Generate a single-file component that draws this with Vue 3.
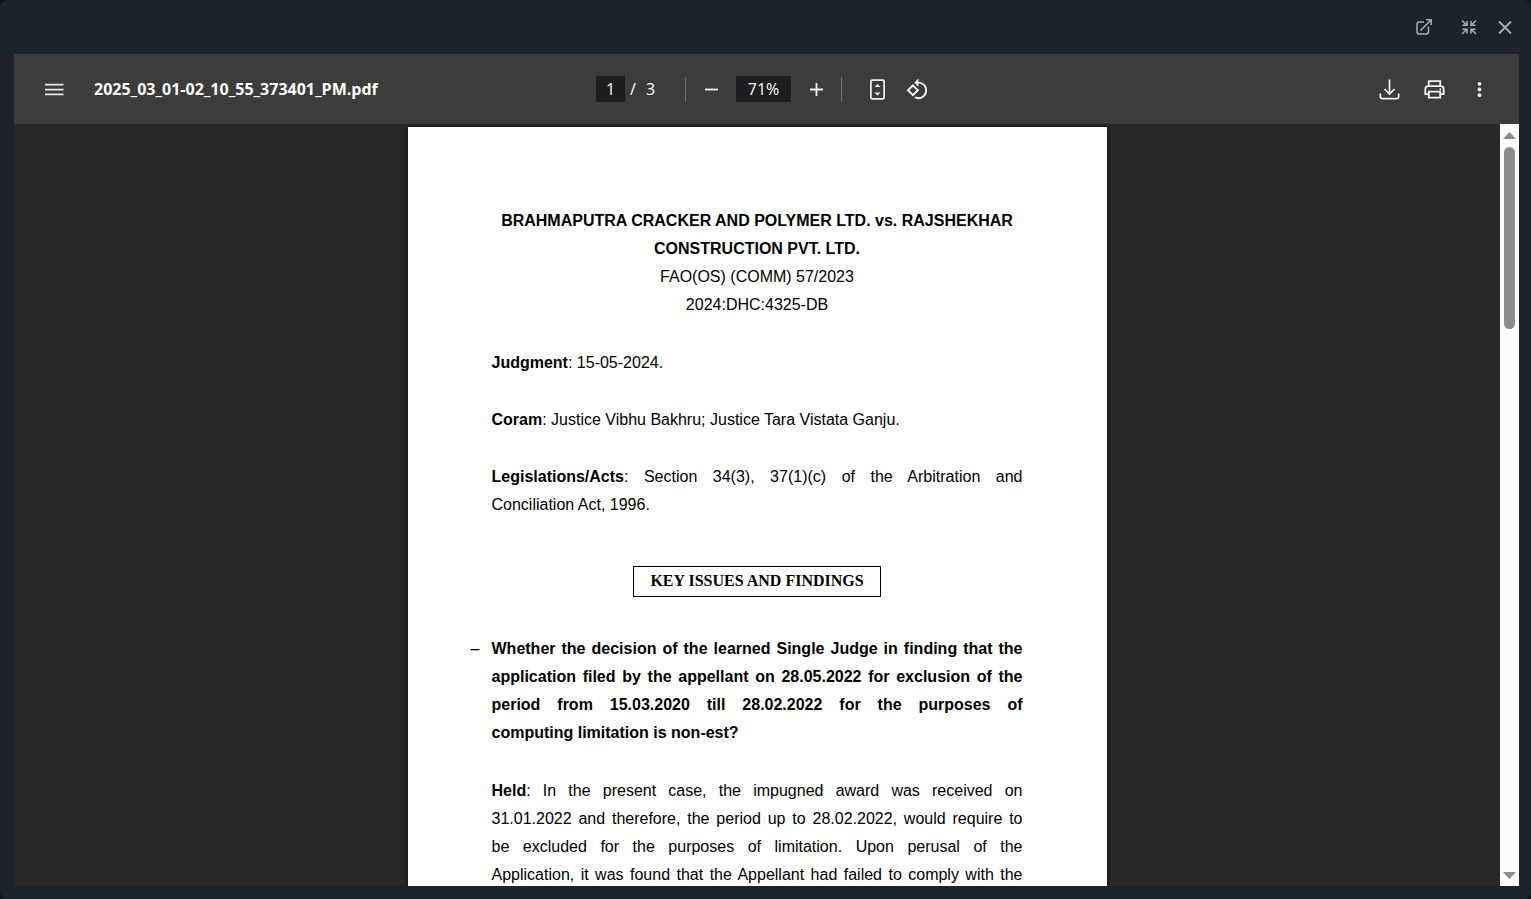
<script setup>
import { ref } from 'vue'

const page = ref('1')
const zoom = ref('71%')

const titleLines = [
  'BRAHMAPUTRA CRACKER AND POLYMER LTD. vs. RAJSHEKHAR',
  'CONSTRUCTION PVT. LTD.',
]
const issueLines = [
  'Whether the decision of the learned Single Judge in finding that the',
  'application filed by the appellant on 28.05.2022 for exclusion of the',
  'period from 15.03.2020 till 28.02.2022 for the purposes of',
]
const heldLines = [
  '31.01.2022 and therefore, the period up to 28.02.2022, would require to',
  'be excluded for the purposes of limitation. Upon perusal of the',
  'Application, it was found that the Appellant had failed to comply with the',
]
</script>

<template>
  <div class="modal">
    <header class="modal-bar">
      <button class="icon-btn small" aria-label="Open in new tab">
        <svg viewBox="0 0 18 18" width="18" height="18" fill="none" stroke="currentColor" stroke-width="1.500">
          <path d="M9 4H4.200Q2 4 2 6.200V13.800Q2 16 4.200 16H11.300Q13.500 16 13.500 13.800V8.500M5.500 12.500L16 2M11 1.800H16.200V7" />
        </svg>
      </button>
      <button class="icon-btn small collapse" aria-label="Exit full screen">
        <svg viewBox="0 0 18 18" width="18" height="18" fill="none" stroke="currentColor" stroke-width="1.500">
          <path d="M2 2.500L6.500 7M7 3V7.300H2.500M16 2.500L11.500 7M11 3V7.300H15.500M2 16L6.500 11.500M7 15.500V11.200H2.500M16 16L11.500 11.500M11 15.500V11.200H15.500" />
        </svg>
      </button>
      <button class="icon-btn small" aria-label="Close">
        <svg viewBox="0 0 18 18" width="18" height="18" fill="none" stroke="currentColor" stroke-width="1.900">
          <path d="M3 3.500L15 15.500M15 3.500L3 15.500" />
        </svg>
      </button>
    </header>

    <main class="viewer">
      <div class="toolbar">
        <div class="left">
          <button class="icon-btn" aria-label="Menu">
            <svg viewBox="0 0 24 24" width="24" height="24" fill="#e8e8e8">
              <path d="M3 6.800h18.500v1.700H3zM3 11.700h18.500v1.700H3zM3 16.600h18.500v1.700H3z" />
            </svg>
          </button>
          <h1 class="filename">2025_03_01-02_10_55_373401_PM.pdf</h1>
        </div>

        <div class="center">
          <input v-model="page" class="field page-field" aria-label="Page number" />
          <span class="total"><span>/</span><span>3</span></span>
          <span class="divider"></span>
          <button class="icon-btn" aria-label="Zoom out">
            <svg viewBox="0 0 24 24" width="24" height="24" fill="currentColor"><path d="M6 11.600h13v1.800H6z" /></svg>
          </button>
          <input v-model="zoom" class="field zoom-field" aria-label="Zoom level" />
          <button class="icon-btn" aria-label="Zoom in">
            <svg viewBox="0 0 24 24" width="24" height="24" fill="currentColor"><path d="M6 11.600h5.600V6h1.800v5.600H19v1.800h-5.600V19h-1.800v-5.600H6z" /></svg>
          </button>
          <span class="divider"></span>
          <button class="icon-btn fit" aria-label="Fit to page">
            <svg viewBox="0 0 24 24" width="24" height="24" fill="none" stroke="currentColor" stroke-width="1.700">
              <rect x="5.900" y="3.200" width="13.200" height="18.700" rx="1.300" />
              <path d="M9.500 10L12.500 7L15.500 10zM9.500 15.500L12.500 18.500L15.500 15.500z" fill="currentColor" stroke="none" />
            </svg>
          </button>
          <button class="icon-btn rotate" aria-label="Rotate counterclockwise">
            <svg viewBox="0 0 24 24" width="24" height="24" fill="currentColor">
              <path transform="translate(.8 .8) scale(.97)" d="M7.340 6.410L.860 12.900l6.490 6.480 6.490-6.480-6.500-6.490zM3.690 12.900l3.660-3.660L11 12.900l-3.660 3.660-3.650-3.660zm15.670-6.260C17.610 4.880 15.300 4 13 4V.760L8.760 5 13 9.240V6c1.790 0 3.580.680 4.950 2.050 2.730 2.730 2.730 7.170 0 9.900C16.580 19.320 14.790 20 13 20c-.970 0-1.940-.210-2.840-.610l-1.490 1.490C10.020 21.620 11.510 22 13 22c2.300 0 4.610-.880 6.360-2.640 3.520-3.510 3.520-9.210 0-12.720z" />
            </svg>
          </button>
        </div>

        <div class="right">
          <button class="icon-btn" aria-label="Download">
            <svg viewBox="0 0 24 24" width="24" height="24" fill="none" stroke="currentColor" stroke-width="1.700">
              <path d="M12.500 2.500V17M7.500 12L12.500 17L17.500 12M3.300 16.500V19.500Q3.300 21.700 5.500 21.700H19.500Q21.700 21.700 21.700 19.500V16.500" />
            </svg>
          </button>
          <button class="icon-btn" aria-label="Print">
            <svg viewBox="0 0 24 24" width="24" height="24" fill="none" stroke="currentColor" stroke-width="1.800">
              <path d="M6.800 9.200V4.200H18.200V9.200M6.800 17.200H3.300V12.200Q3.300 9.200 6.300 9.200H18.700Q21.700 9.200 21.700 12.200V17.200H18.200M6.800 14.700H18.200V20.700H6.800z" />
              <circle cx="18.300" cy="12.200" r="1" fill="currentColor" stroke="none" />
            </svg>
          </button>
          <button class="icon-btn" aria-label="More actions">
            <svg viewBox="0 0 24 24" width="24" height="24" fill="currentColor">
              <circle cx="12.500" cy="6.800" r="1.900" /><circle cx="12.500" cy="12.500" r="1.900" /><circle cx="12.500" cy="18.200" r="1.900" />
            </svg>
          </button>
        </div>
      </div>

      <div class="content">
        <div class="canvas">
          <article class="sheet">
            <div class="heading">
              <strong v-for="line in titleLines" :key="line" class="line">{{ line }}</strong>
              <span class="line">FAO(OS) (COMM) 57/2023</span>
              <span class="line">2024:DHC:4325-DB</span>
            </div>
            <p><strong>Judgment</strong>: 15-05-2024.</p>
            <p><strong>Coram</strong>: Justice Vibhu Bakhru; Justice Tara Vistata Ganju.</p>
            <p>
              <span class="line full"><strong>Legislations/Acts</strong>: Section 34(3), 37(1)(c) of the Arbitration and</span>
              <span class="line">Conciliation Act, 1996.</span>
            </p>
            <h2 class="boxed">KEY ISSUES AND FINDINGS</h2>
            <div class="issue">
              <span class="dash">–</span>
              <strong v-for="line in issueLines" :key="line" class="line full">{{ line }}</strong>
              <strong class="line">computing limitation is non-est?</strong>
            </div>
            <div>
              <span class="line full"><strong>Held</strong>: In the present case, the impugned award was received on</span>
              <span v-for="line in heldLines" :key="line" class="line full">{{ line }}</span>
            </div>
          </article>
        </div>
        <div class="scrollbar" aria-hidden="true">
          <svg viewBox="0 0 13 7" width="13" height="7"><path d="M6.500 0L13 7H0z" fill="#8b8b8b" /></svg>
          <div class="track"><div class="thumb"></div></div>
          <svg viewBox="0 0 13 7" width="13" height="7"><path d="M0 0H13L6.500 7z" fill="#8b8b8b" /></svg>
        </div>
      </div>
    </main>
  </div>
</template>

<style>
body {
  margin: 0;
  background: #11151c;
}
</style>

<style scoped>
* {
  box-sizing: border-box;
}
.modal {
  display: flex;
  flex-direction: column;
  height: 100vh;
  padding: 0 12px 13px 14px;
  border-radius: 8px;
  background: #1d232a;
  overflow: hidden;
  font-family: "Open Sans", "Noto Sans", sans-serif;
}
.modal-bar {
  display: flex;
  align-items: center;
  justify-content: flex-end;
  gap: 18px;
  flex: 0 0 54px;
  padding-right: 5px;
}
.icon-btn {
  display: block;
  width: 24px;
  height: 24px;
  padding: 0;
  border: 0;
  background: none;
  color: #f1f1f1;
  cursor: pointer;
}
.icon-btn svg {
  display: block;
}
.small {
  width: 18px;
  height: 18px;
  color: #a6adbb;
}
.collapse {
  margin-left: 9px;
}
.viewer {
  display: flex;
  flex-direction: column;
  flex: 1;
  min-height: 0;
}
.toolbar {
  display: grid;
  grid-template-columns: 1fr auto 1fr;
  align-items: center;
  flex: 0 0 70px;
  padding: 0 28px 0 20px;
  background: #3c3c3c;
  color: #fff;
}
.left,
.center,
.right {
  display: flex;
  align-items: center;
}
.left {
  gap: 28px;
  padding-left: 8px;
}
.filename {
  margin: 0;
  font-size: 16px;
  font-weight: 700;
  line-height: 24px;
  white-space: nowrap;
}
.field {
  height: 26px;
  padding: 0;
  border: 0;
  background: #1e1e1e;
  color: #fff;
  font: 16px/24px "Open Sans", "Noto Sans", sans-serif;
  text-align: center;
}
.page-field {
  width: 29px;
}
.zoom-field {
  width: 55px;
  margin: 0 13px;
}
.total {
  display: flex;
  gap: 10px;
  width: 60px;
  padding-left: 5px;
  font-size: 16px;
  line-height: 24px;
}
.divider {
  width: 1px;
  height: 25px;
  margin-right: 13px;
  background: #6e6e6e;
}
.icon-btn + .divider {
  margin: 0 0 0 13px;
}
.fit {
  margin-left: 23px;
}
.rotate {
  margin-left: 16px;
}
.right {
  justify-content: flex-end;
  gap: 21px;
}
.content {
  display: flex;
  flex: 1;
  min-height: 0;
  background: #282828;
}
.canvas {
  flex: 1;
  padding-top: 3px;
  overflow: hidden;
}
.sheet {
  width: 699px;
  max-width: 100%;
  margin: 0 auto;
  padding: 80px 84px;
  background: #fff;
  box-shadow: 0 0 4px #111;
  color: #000;
  font: 16px/28px "Liberation Sans", Arial, sans-serif;
}
.line {
  display: block;
  white-space: nowrap;
}
.full {
  text-align: justify;
  text-align-last: justify;
}
.heading {
  margin-bottom: 30px;
  text-align: center;
}
p {
  margin: 0 0 29px;
}
.boxed {
  width: fit-content;
  margin: 47px auto 38px;
  padding: 0 16px 1px;
  border: 1px solid #000;
  font: bold 16px/28px "Liberation Serif", "Times New Roman", serif;
}
.issue {
  position: relative;
  margin-bottom: 30px;
}
.dash {
  position: absolute;
  left: -21px;
}
.scrollbar {
  display: flex;
  flex-direction: column;
  align-items: center;
  flex: 0 0 19px;
  padding: 8px 0 7px;
  background: #fcfcfc;
}
.track {
  flex: 1;
  width: 11px;
  padding: 8px 0;
}
.thumb {
  height: 182px;
  border-radius: 6px;
  background: #8b8b8b;
}
</style>
